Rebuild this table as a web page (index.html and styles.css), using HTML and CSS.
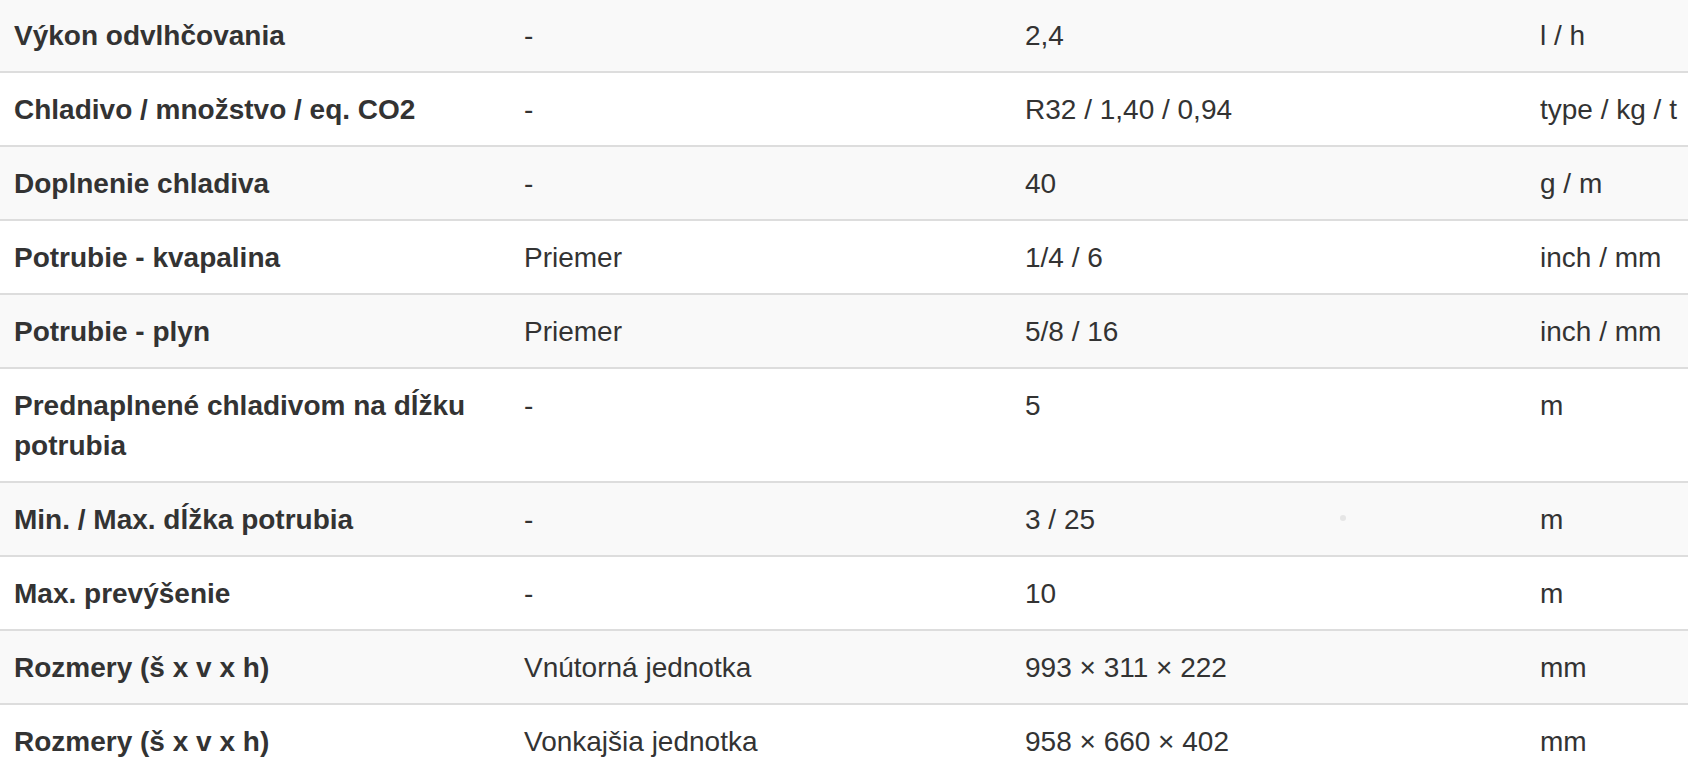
FILE: index.html
```html
<!DOCTYPE html>
<html lang="sk">
<head>
<meta charset="utf-8">
<title>Parametre</title>
<link rel="stylesheet" href="styles.css">
</head>
<body>
<div class="wrap">
<table class="spec">
<colgroup>
<col class="c1"><col class="c2"><col class="c3"><col class="c4">
</colgroup>
<tbody>
<tr><td>Výkon odvlhčovania</td><td>-</td><td>2,4</td><td>l / h</td></tr>
<tr><td>Chladivo / množstvo / eq. CO2</td><td>-</td><td>R32 / 1,40 / 0,94</td><td>type / kg / t</td></tr>
<tr><td>Doplnenie chladiva</td><td>-</td><td>40</td><td>g / m</td></tr>
<tr><td>Potrubie - kvapalina</td><td>Priemer</td><td>1/4 / 6</td><td>inch / mm</td></tr>
<tr><td>Potrubie - plyn</td><td>Priemer</td><td>5/8 / 16</td><td>inch / mm</td></tr>
<tr><td>Prednaplnené chladivom na dĺžku potrubia</td><td>-</td><td>5</td><td>m</td></tr>
<tr><td>Min. / Max. dĺžka potrubia</td><td>-</td><td>3 / 25</td><td>m</td></tr>
<tr><td>Max. prevýšenie</td><td>-</td><td>10</td><td>m</td></tr>
<tr><td>Rozmery (š x v x h)</td><td>Vnútorná jednotka</td><td>993 × 311 × 222</td><td>mm</td></tr>
<tr><td>Rozmery (š x v x h)</td><td>Vonkajšia jednotka</td><td>958 × 660 × 402</td><td>mm</td></tr>
</tbody>
</table>
<span class="dot"></span>
</div>
</body>
</html>
```

FILE: styles.css
```css
html, body {
  margin: 0;
  padding: 0;
  background: #fff;
  overflow: hidden;
}
body {
  font-family: "Liberation Sans", Arial, sans-serif;
  font-size: 28px;
  line-height: 40px;
  color: #333;
}
.wrap {
  position: relative;
}
.spec {
  border-collapse: collapse;
  table-layout: fixed;
  width: 1740px;
  margin: -3px 0 0 -2px;
}
.c1 { width: 510px; }
.c2 { width: 501px; }
.c3 { width: 515px; }
.c4 { width: 214px; }
.spec td {
  padding: 17px 16px 15px;
  border-top: 2px solid #ddd;
  vertical-align: top;
  line-height: 40px;
}
.spec td:first-child {
  font-weight: bold;
}
.spec td:last-child {
  white-space: nowrap;
}
.spec tr:nth-child(odd) td {
  background: #f9f9f9;
}
.dot {
  position: absolute;
  left: 1340px;
  top: 518px;
  width: 6px;
  height: 6px;
  border-radius: 50%;
  background: #e6e6e6;
  filter: blur(0.6px);
}
```
